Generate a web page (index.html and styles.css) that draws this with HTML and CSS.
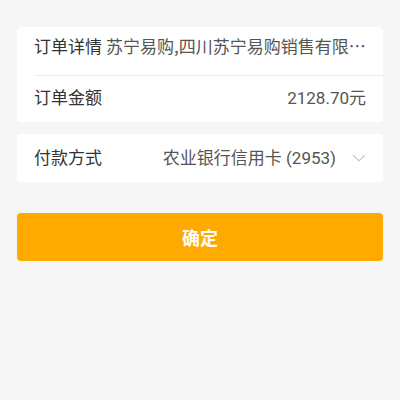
FILE: index.html
```html
<!DOCTYPE html>
<html lang="zh-CN">
<head>
    <meta charset="UTF-8">
    <meta name="viewport" content="width=device-width, initial-scale=1.0">
    <title>确认付款</title>
    <link rel="stylesheet" href="styles.css">
</head>
<body>
    <div class="page">
        <div class="card">
            <div class="row first">
                <span class="label">订单详情</span>
                <span class="detail">苏宁易购,四川苏宁易购销售有限公司成都分公司</span>
            </div>
            <div class="row line">
                <span class="label">订单金额</span>
                <span class="value">2128.70元</span>
            </div>
        </div>

        <div class="card">
            <div class="row pay">
                <span class="label">付款方式</span>
                <span class="value">农业银行信用卡 (2953)</span>
                <svg class="arrow" width="14" height="8" viewBox="0 0 14 8">
                    <path d="M1 1 L7 7 L13 1" fill="none" stroke="#c8c8c8" stroke-width="1.2"/>
                </svg>
            </div>
        </div>

        <button type="button" class="submit">确定</button>
    </div>
</body>
</html>
```

FILE: styles.css
```css
body {
    margin: 0;
    padding: 0;
    background: #f6f6f6;
    font-family: Roboto, "Noto Sans CJK SC", sans-serif;
}

.page {
    padding: 27px 17px 0 17px;
}

.card {
    background: #fff;
    border-radius: 4px;
    padding-left: 17px;
    margin-bottom: 12px;
}

.row {
    display: flex;
    align-items: center;
    padding-right: 17px;
    font-size: 17px;
}

.first {
    height: 37px;
    padding-right: 11px;
    padding-bottom: 11px;
}

.line {
    border-top: 1px solid #ececec;
    height: 40px;
    padding-bottom: 6px;
}

.pay {
    height: 45px;
    padding-bottom: 3px;
}

.label {
    color: #333;
    flex-shrink: 0;
}

.detail {
    color: #555;
    margin-left: 4px;
    font-family: "Noto Sans CJK SC", sans-serif;
    white-space: nowrap;
    overflow: hidden;
    text-overflow: ellipsis;
}

.value {
    color: #555;
    margin-left: auto;
}

.arrow {
    margin-left: 16px;
    margin-top: 2px;
}

.submit {
    display: block;
    width: 100%;
    height: 48px;
    margin-top: 31px;
    border: none;
    border-radius: 4px;
    background: #ffaa00;
    color: #fff;
    font-family: inherit;
    font-size: 18px;
    font-weight: bold;
}
```
